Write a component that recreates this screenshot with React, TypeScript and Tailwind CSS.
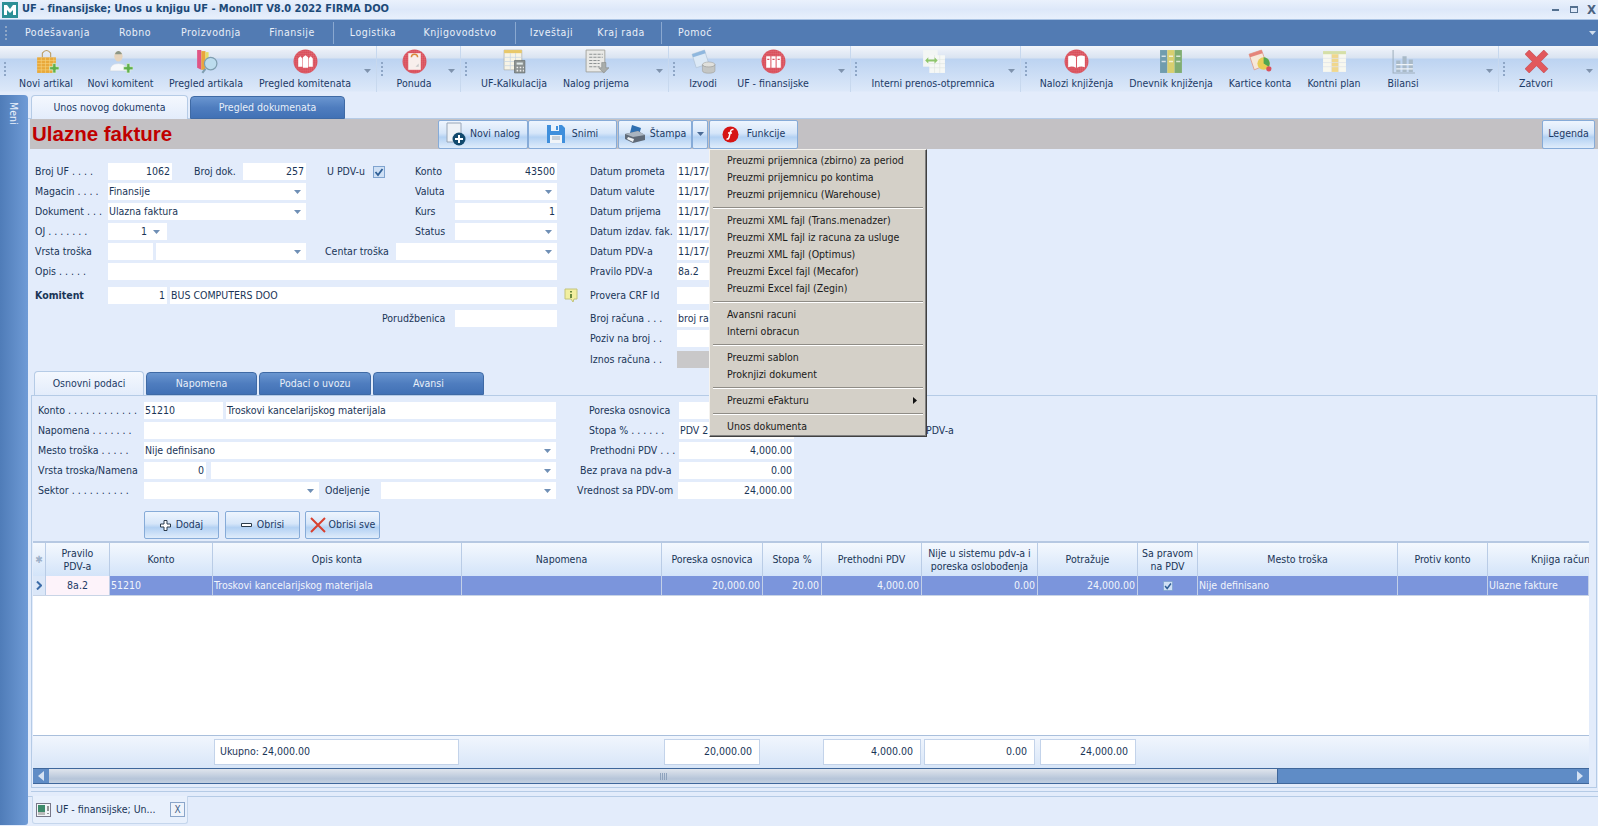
import React from "react";

const Caret = ({ c = "#7f93ad" }: { c?: string }) => (
  <svg width="7" height="4" viewBox="0 0 7 4" className="shrink-0"><path d="M0 0H7L3.5 4Z" fill={c} /></svg>
);

const Grip = () => (
  <div className="flex flex-col gap-[2px] shrink-0">
    {[0, 1, 2, 3].map((i) => <div key={i} className="w-[2px] h-[2px] bg-[#8ea6c6]" />)}
  </div>
);

const Circle = ({ children }: { children: React.ReactNode }) => (
  <svg width="25" height="25" viewBox="0 0 24 24">
    <defs>
      <pattern id="g" width="2" height="2" patternUnits="userSpaceOnUse"><path d="M0 0H2V2" fill="none" stroke="#fff" strokeOpacity=".25" strokeWidth=".4" /></pattern>
    </defs>
    <circle cx="12" cy="12" r="11.5" fill="#d9505c" />
    <circle cx="12" cy="12" r="11.5" fill="url(#g)" />
    {children}
  </svg>
);

const Plus = () => <path d="M18 14h3v3h3v3h-3v3h-3v-3h-3v-3h3z" fill="#5fb04c" stroke="#e6f5e0" strokeWidth=".6" />;

const icons: Record<string, React.ReactNode> = {
  bag: (
    <svg width="25" height="25" viewBox="0 0 24 24">
      <path d="M8 8V4q4-5 8 0v4" fill="none" stroke="#b99a5e" strokeWidth="1" />
      <path d="M3 8h18v15H3z" fill="#e9a93a" />
      <path d="M3 11h18M3 14h18M3 17h18M3 20h18M7 8v15M11 8v15M15 8v15M19 8v15" stroke="#f6d27f" strokeWidth=".6" />
      <Plus />
    </svg>
  ),
  person: (
    <svg width="25" height="25" viewBox="0 0 24 24">
      <ellipse cx="10" cy="7" rx="4" ry="5" fill="#e6d4bd" />
      <path d="M7 4q3-4 6 0v1H7z" fill="#8c9686" />
      <path d="M2 21q0-7 8-7t8 7z" fill="#f6f8fb" stroke="#c8d3de" strokeWidth=".5" />
      <Plus />
    </svg>
  ),
  books: (
    <svg width="25" height="25" viewBox="0 0 24 24">
      <path d="M3 1h4v19l-4-2z" fill="#e05585" />
      <path d="M7 2h4v18H7z" fill="#e9a53c" />
      <path d="M11 3h3v13h-3z" fill="#e5dd66" />
      <circle cx="16" cy="14" r="6" fill="#bcdcee" stroke="#7f9eb0" strokeWidth="1.2" />
      <path d="M11 19l-3 4" stroke="#7f9eb0" strokeWidth="2" />
    </svg>
  ),
  people: (
    <Circle>
      <path d="M5 17V9l2-2 2 2v8zM9.500 18V8l2.500-2 2.500 2v10zM15 17V9l2-2 2 2v8z" fill="#fff" />
    </Circle>
  ),
  doc: (
    <Circle>
      <path d="M6 4h12v16H6z" fill="#f8efec" />
      <path d="M9 8a3 3 0 1 1 6 0" stroke="#d98a3a" strokeWidth="1.4" fill="none" />
      <path d="M13 17l3-3v3z" fill="#c9c9c9" />
    </Circle>
  ),
  calc: (
    <svg width="25" height="25" viewBox="0 0 24 24">
      <path d="M2 1h17v19H2z" fill="#f7f4e6" stroke="#a8a8a0" strokeWidth=".6" />
      <path d="M2 1h17v3H2z" fill="#e8c86a" />
      <path d="M2 8h17M2 12h17M2 16h17M8 4v16M13 4v16" stroke="#c6d4e2" strokeWidth=".7" />
      <path d="M12 11h10v12H12z" fill="#8b9191" stroke="#5f6666" strokeWidth=".6" />
      <path d="M14 13h6v2h-6z" fill="#dfe8e8" />
      <path d="M14 17h1.500v1.500H14zM17 17h1.500v1.500H17zM20 17h1v1.500h-1zM14 20h1.500v1.500H14zM17 20h1.500v1.500H17zM20 20h1v1.500h-1z" fill="#eee" />
    </svg>
  ),
  list: (
    <svg width="25" height="25" viewBox="0 0 24 24">
      <path d="M2 1h18v21H2z" fill="#e9e9e6" stroke="#9a9a94" strokeWidth=".8" />
      <path d="M5 5h13M5 8h13M5 11h10M5 14h10M5 17h10" stroke="#8d9293" strokeWidth="1" strokeDasharray="3 1" />
      <path d="M17 13h4v5h3l-5 5-5-5h3z" fill="#a9adab" stroke="#808482" strokeWidth=".5" />
    </svg>
  ),
  izvodi: (
    <svg width="25" height="25" viewBox="0 0 24 24">
      <path d="M1 5l12-4 4 13-12 4z" fill="#dce9f6" stroke="#aebfd1" strokeWidth=".6" />
      <path d="M1 5l12-4 1 3-12 4z" fill="#8fb7de" />
      <ellipse cx="17" cy="15" rx="6" ry="2.500" fill="#e0e0dc" stroke="#9a9a96" strokeWidth=".5" />
      <path d="M11 15v6c0 3 12 3 12 0v-6c0 3-12 3-12 0" fill="#c4c6c4" stroke="#9a9a96" strokeWidth=".5" />
    </svg>
  ),
  binders: (
    <Circle>
      <path d="M5 7h4v11H5zM10 7h4v11h-4zM15 7h4v11h-4z" fill="#fff" />
      <path d="M6 10h2M11 10h2M16 10h2" stroke="#d9505c" strokeWidth="1.200" />
    </Circle>
  ),
  transfer: (
    <svg width="25" height="25" viewBox="0 0 24 24">
      <path d="M2 1h14v16H2z" fill="#f3f6f4" />
      <path d="M8 6h15v17H8z" fill="#f6f8f6" />
      <path d="M8 10h15M8 14h15M8 18h15M13 6v17M18 6v17" stroke="#dfe6e0" strokeWidth=".6" />
      <path d="M4 11l3-3v2h6V8l3 3-3 3v-2H7v2z" fill="#8fc66c" />
    </svg>
  ),
  book: (
    <Circle>
      <path d="M4 7q4-1.500 7.500 0.500V18q-3.500-2-7.500-.5zM12.500 7.500q3.500-2 7.500-.5v10.500q-4-1.500-7.500.5z" fill="#fff" />
    </Circle>
  ),
  dnevnik: (
    <svg width="25" height="25" viewBox="0 0 24 24">
      <path d="M1 1h7v22H1z" fill="#6f9cae" />
      <path d="M8 1h7v22H8z" fill="#d8cf6f" />
      <path d="M15 1h7v22h-7z" fill="#80ad72" />
      <path d="M2.500 7h4M9.500 7h4M16.500 7h4M2.500 12h4M9.500 12h4M16.500 12h4" stroke="#fff" strokeOpacity=".7" strokeWidth="1.500" />
    </svg>
  ),
  kartice: (
    <svg width="25" height="25" viewBox="0 0 24 24">
      <path d="M1 5l12-4 5 14-12 5z" fill="#f6e8d8" stroke="#dd9a8c" strokeWidth=".8" />
      <path d="M1 5l12-4 1 3L2 8z" fill="#e4847a" />
      <circle cx="15" cy="14" r="6" fill="#e7cd55" />
      <path d="M15 14V8a6 6 0 0 1 5 9z" fill="#4fa651" />
      <circle cx="20" cy="19" r="2.500" fill="#d9505c" />
    </svg>
  ),
  plan: (
    <svg width="25" height="25" viewBox="0 0 24 24">
      <path d="M1 2h22v20H1z" fill="#f8f8ef" />
      <path d="M1 2h22v3H1z" fill="#d5dfa8" />
      <path d="M9 5h7v17H9z" fill="#f0d78d" />
      <path d="M1 9h22M1 13h22M1 17h22M9 5v17M16 5v17" stroke="#dfe4ea" strokeWidth=".7" />
    </svg>
  ),
  bilansi: (
    <svg width="25" height="25" viewBox="0 0 24 24">
      <path d="M2 1v22h21" stroke="#9fb0bd" strokeWidth="1" fill="none" />
      <path d="M5 11h4v11H5zM11 7h4v15h-4zM17 10h4v12h-4z" fill="#a9bac8" />
      <path d="M5 15h16M5 19h16" stroke="#f0f4f8" strokeWidth="1.200" />
    </svg>
  ),
  close: (
    <svg width="25" height="25" viewBox="0 0 24 24">
      <path d="M5 1l7 7 7-7 4 4-7 7 7 7-4 4-7-7-7 7-4-4 7-7-7-7z" fill="#e2585c" stroke="#c0474c" strokeWidth=".6" />
    </svg>
  ),
};

type TItem = { t: string; i: string; w: string };
const sections: { w: string; pl: string; items: TItem[] }[] = [
  { w: "w-[377px]", pl: "pl-[9px]", items: [
    { t: "Novi artikal", i: "bag", w: "w-[74px]" },
    { t: "Novi komitent", i: "person", w: "w-[75px]" },
    { t: "Pregled artikala", i: "books", w: "w-[96px]" },
    { t: "Pregled komitenata", i: "people", w: "w-[102px]" },
  ] },
  { w: "w-[84px]", pl: "pl-[11px]", items: [{ t: "Ponuda", i: "doc", w: "w-[52px]" }] },
  { w: "w-[208px]", pl: "pl-[17px]", items: [
    { t: "UF-Kalkulacija", i: "calc", w: "w-[72px]" },
    { t: "Nalog prijema", i: "list", w: "w-[92px]" },
  ] },
  { w: "w-[182px]", pl: "pl-[11px]", items: [
    { t: "Izvodi", i: "izvodi", w: "w-[46px]" },
    { t: "UF - finansijske", i: "binders", w: "w-[94px]" },
  ] },
  { w: "w-[170px]", pl: "pl-[14px]", items: [{ t: "Interni prenos-otpremnica", i: "transfer", w: "w-[136px]" }] },
  { w: "w-[478px]", pl: "pl-[15px]", items: [
    { t: "Nalozi knjiženja", i: "book", w: "w-[81px]" },
    { t: "Dnevnik knjiženja", i: "dnevnik", w: "w-[108px]" },
    { t: "Kartice konta", i: "kartice", w: "w-[70px]" },
    { t: "Kontni plan", i: "plan", w: "w-[78px]" },
    { t: "Bilansi", i: "bilansi", w: "w-[60px]" },
  ] },
  { w: "w-[99px]", pl: "pl-[11px]", items: [{ t: "Zatvori", i: "close", w: "w-[52px]" }] },
];

const Toolbar = () => (
  <div className="flex h-[48px] text-[#1c3a66] bg-[linear-gradient(#f3f6fb_0px,#d9e3f1_12px,#bcd3f1_13px,#dce8f9_45px,#e3ecfb_46px)]">
    {sections.map((s, i) => (
      <div key={i} className={`${s.w} ${s.pl} relative flex h-[46px] shrink-0 border-r border-[#c7d8ee] last:border-r-0`}>
        <div className="absolute left-[4px] top-[16px]"><Grip /></div>
        {s.items.map((it) => (
          <div key={it.t} className={`${it.w} flex flex-col items-center shrink-0 whitespace-nowrap`}>
            <div className="h-[26px] mt-[3px]">{icons[it.i]}</div>
            <div className="mt-[1px] leading-[14px]">{it.t}</div>
          </div>
        ))}
        <div className="ml-auto mr-[5px] mt-[23px]"><Caret /></div>
      </div>
    ))}
  </div>
);

const menuItems: [string, string][] = [
  ["Podešavanja", "w-[91px]"], ["Robno", "w-[64px]"], ["Proizvodnja", "w-[88px]"], ["Finansije", "w-[74px]"], ["|", "ml-[4px]"],
  ["Logistika", "w-[78px]"], ["Knjigovodstvo", "w-[96px]"], ["|", "ml-[7px]"], ["Izveštaji", "w-[71px]"], ["Kraj rada", "w-[68px]"], ["|", "ml-[6px]"], ["Pomoć", "w-[66px]"],
];

const MenuBar = () => (
  <div className="flex items-center h-[27px] bg-[#527bb3] pl-[5px] text-[#e9eff8] tracking-[0.5px] border-t border-[#a9c3e4]">
    <div className="w-[7px]"><Grip /></div>
    {menuItems.map(([t, w], i) =>
      t === "|" ? <div key={i} className={`${w} w-[1px] h-[22px] bg-[#8aa8d0] shrink-0`} /> : <div key={i} className={`${w} text-center shrink-0`}>{t}</div>
    )}
    <div className="ml-auto mr-[2px]"><Caret c="#cfdcec" /></div>
  </div>
);

const TitleBar = () => (
  <div className="flex items-center h-[19px] bg-[linear-gradient(#eaf1fc,#dde8f9_50%,#e8f0fc)] pl-[2px]">
    <svg width="16" height="16" viewBox="0 0 16 16" className="shrink-0">
      <rect width="16" height="16" fill="#2c8f96" />
      <path d="M2 3h3l3 4 3-4h3v10h-3V8l-3 3-3-3v5H2z" fill="#fff" />
    </svg>
    <div className="ml-[4px] font-bold text-[#1d4a78] text-[11px] tracking-[-0.05px] whitespace-nowrap">UF - finansijske; Unos u knjigu UF - MonolIT V8.0 2022 FIRMA DOO</div>
    <div className="ml-auto flex items-center text-[#4a6280] font-bold">
      <div className="w-[7px] h-[2px] bg-[#54708f] mr-[11px]" />
      <div className="w-[8px] h-[7px] border border-[#54708f] border-t-2 mr-[9px]" />
      <div className="mr-[2px] text-[13px] leading-none">X</div>
    </div>
  </div>
);

const Inp = ({ w, v = "", right, sel, grey }: { w: string; v?: string; right?: boolean; sel?: boolean; grey?: boolean }) => (
  <div className={`${w} h-[17px] shrink-0 pt-[1px] ${grey ? "bg-[#c9c8c9]" : "bg-white"} flex items-center overflow-hidden whitespace-nowrap ${right ? "justify-end pr-[2px]" : "pl-[1px]"}`}>
    <span className={sel ? `flex-1 ${right ? "text-right" : ""}` : ""}>{v}</span>
    {sel && <span className="mr-[5px] ml-[6px]"><Caret c="#6f8fb5" /></span>}
  </div>
);

const Lab = ({ w, t, right, b }: { w: string; t: string; right?: boolean; b?: boolean }) => (
  <div className={`${w} shrink-0 pt-[1px] whitespace-nowrap ${right ? "text-right" : ""} ${b ? "font-bold" : ""}`}>{t}</div>
);

const Row = ({ children, cls = "" }: { children: React.ReactNode; cls?: string }) => (
  <div className={`flex items-center h-[17px] ${cls}`}>{children}</div>
);

const Check = ({ s = 12 }: { s?: number }) => (
  <svg width={s} height={s} viewBox="0 0 12 12" className="shrink-0">
    <rect x=".5" y=".5" width="11" height="11" fill="#cfe0f5" stroke="#7fa3cf" />
    <path d="M2.500 6l2.500 3 4.500-6" fill="none" stroke="#2f5f96" strokeWidth="1.800" />
  </svg>
);

const Tab = ({ t, w, active }: { t: string; w: string; active?: boolean }) => (
  <div className={`${w} shrink-0 flex items-center justify-center rounded-t-[4px] border ${active ? "h-[24px] bg-[linear-gradient(#f4f8fe,#e3ecfb)] border-[#b5cbe6] border-b-0 text-[#1c3a66] relative z-10" : "h-[23px] mt-[1px] bg-[linear-gradient(#6a96d0,#4f7dbf_50%,#4171b5)] border-[#3f6aa5] text-[#e8eff9]"}`}>{t}</div>
);

const Btn = ({ w, t, icon, gap = "gap-[4px]", h = "h-[29px]" }: { w: string; t: string; icon?: React.ReactNode; gap?: string; h?: string }) => (
  <div className={`${w} ${gap} ${h} shrink-0 flex items-center justify-center rounded-[2px] border border-[#86abd8] bg-[linear-gradient(#eef5fe,#d6e6f9_45%,#b3d1f3_60%,#dfecfb)] text-[#1c3a66] whitespace-nowrap`}>
    {icon}{t && <span>{t}</span>}
  </div>
);

const UpperForm = () => (
  <div className="flex h-[222px] pl-[7px] pt-[14px] shrink-0">
    <div className="w-[549px] shrink-0 flex flex-col gap-[3px]">
      <Row>
        <Lab w="w-[73px]" t="Broj UF . . . ." /><Inp w="w-[64px]" v="1062" right />
        <Lab w="w-[71px] pl-[22px]" t="Broj dok." /><Inp w="w-[63px]" v="257" right />
        <Lab w="w-[67px] pl-[21px]" t="U PDV-u" /><Check /><div className="w-[30px] shrink-0" /><Lab w="w-[40px]" t="Konto" /><Inp w="w-[102px]" v="43500" right />
      </Row>
      <Row><Lab w="w-[73px]" t="Magacin . . . ." /><Inp w="w-[198px]" v="Finansije" sel /><div className="w-[109px]" /><Lab w="w-[40px]" t="Valuta" /><Inp w="w-[102px]" sel /></Row>
      <Row><Lab w="w-[73px]" t="Dokument . . ." /><Inp w="w-[198px]" v="Ulazna faktura" sel /><div className="w-[109px]" /><Lab w="w-[40px]" t="Kurs" /><Inp w="w-[102px]" v="1" right /></Row>
      <Row><Lab w="w-[73px]" t="OJ . . . . . . ." /><Inp w="w-[59px]" v="1" right sel /><div className="w-[248px]" /><Lab w="w-[40px]" t="Status" /><Inp w="w-[102px]" sel /></Row>
      <Row>
        <Lab w="w-[73px]" t="Vrsta troška" /><Inp w="w-[45px]" /><div className="w-[3px]" /><Inp w="w-[150px]" sel />
        <Lab w="w-[90px] pl-[19px]" t="Centar troška" /><Inp w="w-[161px]" sel />
      </Row>
      <Row><Lab w="w-[73px]" t="Opis . . . . ." /><Inp w="w-[449px]" /></Row>
      <Row cls="mt-[4px]"><Lab w="w-[73px]" t="Komitent" b /><Inp w="w-[59px]" v="1" right /><div className="w-[3px]" /><Inp w="w-[387px]" v="BUS COMPUTERS DOO" />
        <svg width="14" height="15" viewBox="0 0 14 15" className="ml-[7px] shrink-0"><path d="M1 1h12v10h-3l-1 3-2-3H1z" fill="#f2efa0" stroke="#c2c47a" /><path d="M6 3h2v1.500H6zM6 6h2v4H6z" fill="#6a8a3f" /></svg>
      </Row>
      <Row cls="mt-[3px]"><div className="w-[347px]" /><Lab w="w-[63px] text-right" t="Porudžbenica" /><div className="w-[10px]" /><Inp w="w-[102px]" /></Row>
    </div>
    <div className="ml-[6px] w-[220px] flex flex-col gap-[3px]">
      {[["Datum prometa", "11/17/"], ["Datum valute", "11/17/"], ["Datum prijema", "11/17/"], ["Datum izdav. fak.", "11/17/"], ["Datum PDV-a", "11/17/"], ["Pravilo PDV-a", "8a.2"]].map(([a, b]) => (
        <Row key={a}><Lab w="w-[87px]" t={a} /><Inp w="w-[120px]" v={b} /></Row>
      ))}
      <Row cls="mt-[4px]"><Lab w="w-[87px]" t="Provera CRF Id" /><Inp w="w-[120px]" /></Row>
      <Row cls="mt-[3px]"><Lab w="w-[87px]" t="Broj računa . . ." /><Inp w="w-[120px]" v="broj ra" /></Row>
      <Row><Lab w="w-[87px]" t="Poziv na broj . ." /><Inp w="w-[120px]" /></Row>
      <Row cls="mt-[1px]"><Lab w="w-[87px]" t="Iznos računa . ." /><Inp w="w-[120px]" grey /></Row>
    </div>
  </div>
);

const LowerForm = () => (
  <div className="flex h-[115px] pt-[6px] pl-[6px] shrink-0">
    <div className="w-[518px] shrink-0 flex flex-col gap-[3px]">
      <Row><Lab w="w-[106px]" t="Konto . . . . . . . . . . . ." /><Inp w="w-[79px]" v="51210" /><div className="w-[3px]" /><Inp w="w-[330px]" v="Troskovi kancelarijskog materijala" /></Row>
      <Row><Lab w="w-[106px]" t="Napomena . . . . . . ." /><Inp w="w-[412px]" /></Row>
      <Row><Lab w="w-[106px]" t="Mesto troška . . . . ." /><Inp w="w-[412px]" v="Nije definisano" sel /></Row>
      <Row><Lab w="w-[106px]" t="Vrsta troska/Namena" /><Inp w="w-[62px]" v="0" right /><div className="w-[5px]" /><Inp w="w-[345px]" sel /></Row>
      <Row><Lab w="w-[106px]" t="Sektor . . . . . . . . . ." /><Inp w="w-[175px]" sel /><Lab w="w-[62px] pl-[6px]" t="Odeljenje" /><Inp w="w-[175px]" sel /></Row>
    </div>
    <div className="w-[250px] shrink-0 flex flex-col gap-[3px]">
      <Row><Lab w="w-[123px] pl-[33px]" t="Poreska osnovica" /><Inp w="w-[115px]" /></Row>
      <Row><Lab w="w-[123px] pl-[33px]" t="Stopa %  . . . . . ." /><Inp w="w-[115px]" v="PDV 2" /></Row>
      <Row><Lab w="w-[123px] pl-[34px]" t="Prethodni PDV . . ." /><Inp w="w-[115px]" v="4,000.00" right /></Row>
      <Row><Lab w="w-[123px] pl-[24px]" t="Bez prava na pdv-a" /><Inp w="w-[115px]" v="0.00" right /></Row>
      <Row><Lab w="w-[122px] pl-[21px]" t="Vrednost sa PDV-om" /><Inp w="w-[116px]" v="24,000.00" right /></Row>
    </div>
    <div className="pt-[21px] pl-[120px] whitespace-nowrap">PDV-a</div>
  </div>
);

const cols: { t: string; w: string; v?: string; r?: boolean }[] = [
  { t: "Pravilo PDV-a", w: "w-[64px]", v: "8a.2" },
  { t: "Konto", w: "w-[103px]", v: "51210" },
  { t: "Opis konta", w: "w-[249px]", v: "Troskovi kancelarijskog materijala" },
  { t: "Napomena", w: "w-[200px]" },
  { t: "Poreska osnovica", w: "w-[101px]", v: "20,000.00", r: true },
  { t: "Stopa %", w: "w-[59px]", v: "20.00", r: true },
  { t: "Prethodni PDV", w: "w-[100px]", v: "4,000.00", r: true },
  { t: "Nije u sistemu pdv-a i poreska oslobođenja", w: "w-[116px]", v: "0.00", r: true },
  { t: "Potražuje", w: "w-[100px]", v: "24,000.00", r: true },
  { t: "Sa pravom na PDV", w: "w-[60px]", v: "check" },
  { t: "Mesto troška", w: "w-[200px]", v: "Nije definisano" },
  { t: "Protiv konto", w: "w-[90px]" },
  { t: "Knjiga računa", w: "w-[101px]", v: "Ulazne fakture" },
];

const Grid = () => (
  <div className="flex-1 flex flex-col bg-white min-h-0 ml-[1px] mr-[7px]">
    <div className="flex h-[35px] border-t-2 border-[#b6c8e2] bg-[linear-gradient(#f4f8fe,#d3e4f9)]">
      <div className="w-[13px] shrink-0 border-r border-[#b9cce6] flex items-center justify-center text-[10px] text-[#9db0c8]">✱</div>
      {cols.map((c, i) => (
        <div key={c.t} className={`${c.w} shrink-0 border-r border-[#b9cce6] flex items-center overflow-hidden text-center leading-[13px] ${i === 12 ? "pl-[43px] whitespace-nowrap border-r-0" : i === 0 ? "justify-center px-[10px]" : "justify-center px-[2px]"}`}>{c.t}</div>
      ))}
    </div>
    <div className="flex h-[20px] border-b border-[#c8d4e6]">
      <div className="w-[13px] shrink-0 bg-[#dbe7f8] border-r border-[#b9cce6] flex items-center justify-center">
        <svg width="6" height="9" viewBox="0 0 6 9"><path d="M1 0.500L5 4.500 1 8.500" fill="none" stroke="#3c6ca8" strokeWidth="2" /></svg>
      </div>
      {cols.map((c, i) => (
        <div key={c.t} className={`${c.w} shrink-0 border-r border-[#c3d0e8] flex items-center overflow-hidden whitespace-nowrap px-[1px] ${i === 0 ? "bg-[#fdf3fa] text-[#1c3a66] justify-center" : "bg-[#7b95dc] text-[#f1f4fb]"} ${c.r ? "justify-end pr-[2px]" : ""} ${c.v === "check" ? "justify-center" : ""}`}>
          {c.v === "check" ? <Check s={10} /> : c.v}
        </div>
      ))}
    </div>
    <div className="flex-1" />
  </div>
);

const FootBox = ({ w, t, ml, right }: { w: string; t: string; ml: string; right?: boolean }) => (
  <div className={`${w} ${ml} h-[26px] shrink-0 bg-white border border-[#c3d3ea] flex items-center ${right ? "justify-end pr-[7px]" : "pl-[5px]"}`}>{t}</div>
);

const Footer = () => (
  <>
    <div className="flex items-center h-[33px] ml-[1px] mr-[7px] border-t border-[#a9bfdc] bg-[linear-gradient(#f1f6fd,#d8e6f8)] shrink-0">
      <FootBox w="w-[245px]" ml="ml-[181px]" t="Ukupno: 24,000.00" />
      <FootBox w="w-[96px]" ml="ml-[205px]" t="20,000.00" right />
      <FootBox w="w-[98px]" ml="ml-[63px]" t="4,000.00" right />
      <FootBox w="w-[111px]" ml="ml-[3px]" t="0.00" right />
      <FootBox w="w-[96px]" ml="ml-[5px]" t="24,000.00" right />
    </div>
    <div className="flex h-[16px] ml-[1px] mr-[7px] border-y border-[#3f679b] bg-[#5f8cc6] shrink-0">
      <div className="w-[16px] flex items-center justify-center"><svg width="6" height="10" viewBox="0 0 6 10"><path d="M6 0V10L0 5Z" fill="#d5e2f3" /></svg></div>
      <div className="w-[1229px] border-r border-[#3f679b] bg-[linear-gradient(#e0e5ed,#b6c5d9_70%,#c3d0e1)] flex items-center justify-center">
        <div className="flex gap-[1px]">{[0, 1, 2, 3].map((i) => <div key={i} className="w-[1px] h-[7px] bg-[#8fa3bd]" />)}</div>
      </div>
      <div className="ml-auto w-[12px] flex items-center"><svg width="6" height="10" viewBox="0 0 6 10"><path d="M0 0V10L6 5Z" fill="#d5e2f3" /></svg></div>
    </div>
  </>
);

const menu: (string | null | [string])[] = [
  "Preuzmi prijemnica (zbirno) za period", "Preuzmi prijemnicu po kontima", "Preuzmi prijemnicu (Warehouse)", null,
  "Preuzmi XML fajl (Trans.menadzer)", "Preuzmi XML fajl iz racuna za usluge", "Preuzmi XML fajl (Optimus)", "Preuzmi Excel fajl (Mecafor)", "Preuzmi Excel fajl (Zegin)", null,
  "Avansni racuni", "Interni obracun", null,
  "Preuzmi sablon", "Proknjizi dokument", null,
  ["Preuzmi eFakturu"], null,
  "Unos dokumenta",
];

const Dropdown = () => (
  <div className="absolute left-[709px] top-[149px] w-[218px] h-[288px] z-30 bg-[#d4d0c8] border border-t-[#f4f2ee] border-l-[#f4f2ee] border-r-[#404040] border-b-[#404040] shadow-[inset_-1px_-1px_0_#808080] pt-[2px] px-[3px] text-[#1a1a1a]">
    {menu.map((m, i) =>
      m === null ? (
        <div key={i} className="h-[9px] flex items-center"><div className="w-full h-[2px] border-t border-[#8f8c86] border-b border-b-white" /></div>
      ) : Array.isArray(m) ? (
        <div key={i} className="h-[17px] flex items-center pl-[14px]">{m[0]}<svg width="4" height="7" viewBox="0 0 4 7" className="ml-auto mr-[6px]"><path d="M0 0V7L4 3.500Z" fill="#111" /></svg></div>
      ) : (
        <div key={i} className="h-[17px] flex items-center pl-[14px] whitespace-nowrap">{m}</div>
      )
    )}
  </div>
);

export default function App() {
  return (
    <div className="relative w-[1598px] h-[826px] overflow-hidden bg-[#e3ecfb] text-[10.5px] text-[#1a3557] font-['DejaVu_Sans_Condensed','Liberation_Sans',sans-serif]">
      <TitleBar />
      <MenuBar />
      <Toolbar />
      <div className="flex h-[732px]">
        <div className="w-[28px] mt-[1px] mb-[1px] shrink-0 rounded-tr-[4px] rounded-br-[3px] bg-[linear-gradient(90deg,#4f7cb8,#6f9bd6)] flex justify-center pt-[7px]">
          <span className="[writing-mode:vertical-rl] text-[#eaf1fb] leading-none">Meni</span>
        </div>
        <div className="flex-1 min-w-0 flex flex-col">
          <div className="flex h-[25px] pl-[3px] pt-[1px] gap-[2px] border-b border-[#b5cbe6] shrink-0">
            <Tab t="Unos novog dokumenta" w="w-[157px]" active />
            <Tab t="Pregled dokumenata" w="w-[155px]" />
          </div>
          <div className="flex h-[30px] ml-[2px] bg-[#c3c1c4] items-center shrink-0">
            <div className="w-[408px] text-[#c00000] font-bold text-[20.5px] pl-[2px] font-['Liberation_Sans',sans-serif] leading-none whitespace-nowrap shrink-0">Ulazne fakture</div>
            <Btn w="w-[90px]" t="Novi nalog" gap="gap-[4px]" icon={
              <svg width="20" height="24" viewBox="0 0 20 24"><path d="M1 1h14v19H1z" fill="#eef2f7" stroke="#98a6b8" /><circle cx="13" cy="17" r="6.500" fill="#124a6e" /><path d="M12 13h2v3h3v2h-3v3h-2v-3H9v-2h3z" fill="#fff" /></svg>
            } />
            <Btn w="w-[89px]" t="Snimi" gap="gap-[7px]" icon={
              <svg width="18" height="18" viewBox="0 0 18 18"><path d="M0 0h15l3 3v15H0z" fill="#3f8fdc" /><path d="M4 0h8v6H4z" fill="#e9f2fb" /><path d="M9 1h2v4H9z" fill="#3f8fdc" /><path d="M3 10h12v8H3z" fill="#f0f4f8" /><path d="M5 12h8M5 14h8" stroke="#9ab" /></svg>
            } />
            <div className="w-[1px]" />
            <Btn w="w-[74px]" t="Štampa" gap="gap-[4px]" icon={
              <svg width="22" height="20" viewBox="0 0 22 20"><path d="M8 1l9 3-2 7-9-2z" fill="#2f6fb0" /><path d="M1 10l13-3 7 4v5l-12 3-8-4z" fill="#5f6a78" /><path d="M1 10l8 3 12-2-7-4z" fill="#a9b4c0" /><path d="M3 15l6 3 1-3-6-2z" fill="#eef2f5" /></svg>
            } />
            <Btn w="w-[16px]" t="" icon={<Caret c="#4a6a96" />} gap="gap-0" />
            <div className="w-[1px]" />
            <Btn w="w-[89px]" t="Funkcije" gap="gap-[8px]" icon={
              <svg width="17" height="17" viewBox="0 0 17 17"><circle cx="8.500" cy="8.500" r="8" fill="#d61414" /><path d="M11.500 3.500q-2.500-.5-3 2L7 11.500q-.5 2-2.500 1.500M6 7h4" fill="none" stroke="#fff" strokeWidth="1.500" /></svg>
            } />
            <div className="ml-auto mr-[3px]"><Btn w="w-[53px]" t="Legenda" /></div>
          </div>
          <UpperForm />
          <div className="flex h-[24px] pl-[6px] gap-[2px] shrink-0">
            <Tab t="Osnovni podaci" w="w-[110px]" active />
            <Tab t="Napomena" w="w-[111px]" />
            <Tab t="Podaci o uvozu" w="w-[112px]" />
            <Tab t="Avansi" w="w-[111px]" />
          </div>
          <div className="flex flex-col h-[393px] ml-[3px] mr-[1px] pb-[3px] border border-[#b5cbe6] shrink-0">
            <LowerForm />
            <div className="flex ml-[112px] h-[30px] shrink-0">
              <Btn w="w-[75px]" t="Dodaj" gap="gap-[5px]" h="h-[28px]" icon={<svg width="11" height="11" viewBox="0 0 11 11"><path d="M4 .5h3v3.500h3.500v3H7v3.500H4V7H.5V4H4z" fill="#fff" stroke="#2a3a4a" /></svg>} />
              <div className="w-[6px] shrink-0" />
              <Btn w="w-[75px]" t="Obrisi" gap="gap-[5px]" h="h-[28px]" icon={<svg width="11" height="5" viewBox="0 0 11 5"><path d="M.5.5h10v3H.5z" fill="#fff" stroke="#2a3a4a" /></svg>} />
              <div className="w-[5px] shrink-0" />
              <Btn w="w-[75px]" t="Obrisi sve" gap="gap-[3px]" h="h-[28px]" icon={<svg width="16" height="16" viewBox="0 0 16 16"><path d="M1 1l14 14M15 1L1 15" stroke="#d8402f" strokeWidth="2" /></svg>} />
            </div>
            <Grid />
            <Footer />
          </div>
          <div className="h-[4px] ml-[3px] border-b border-[#b5cbe6] shrink-0" />
          <div className="flex-1 mt-[4px] border-t border-[#b5cbe6] relative">
            <div className="absolute left-[4px] -top-[1px] w-[156px] h-[28px] bg-[#e8f0fc] border border-t-0 border-[#c5d6ec] rounded-b-[3px] flex items-center pl-[3px]">
              <svg width="15" height="14" viewBox="0 0 15 14" className="shrink-0"><rect x=".5" y=".5" width="14" height="13" fill="#f2f5f8" stroke="#778" /><path d="M2 2h7v10H2z" fill="#3d8a6a" /><path d="M2 9h7v3H2z" fill="#bbb" /><path d="M12 3v5M12 10v1" stroke="#333" /></svg>
              <span className="ml-[5px] whitespace-nowrap">UF - finansijske; Un...</span>
              <div className="ml-auto mr-[2px] w-[15px] h-[15px] border border-[#8aa5c9] bg-[#eef3fb] flex items-center justify-center text-[#3f5f88] text-[10px] leading-none">X</div>
            </div>
          </div>
        </div>
      </div>
      <Dropdown />
    </div>
  );
}
